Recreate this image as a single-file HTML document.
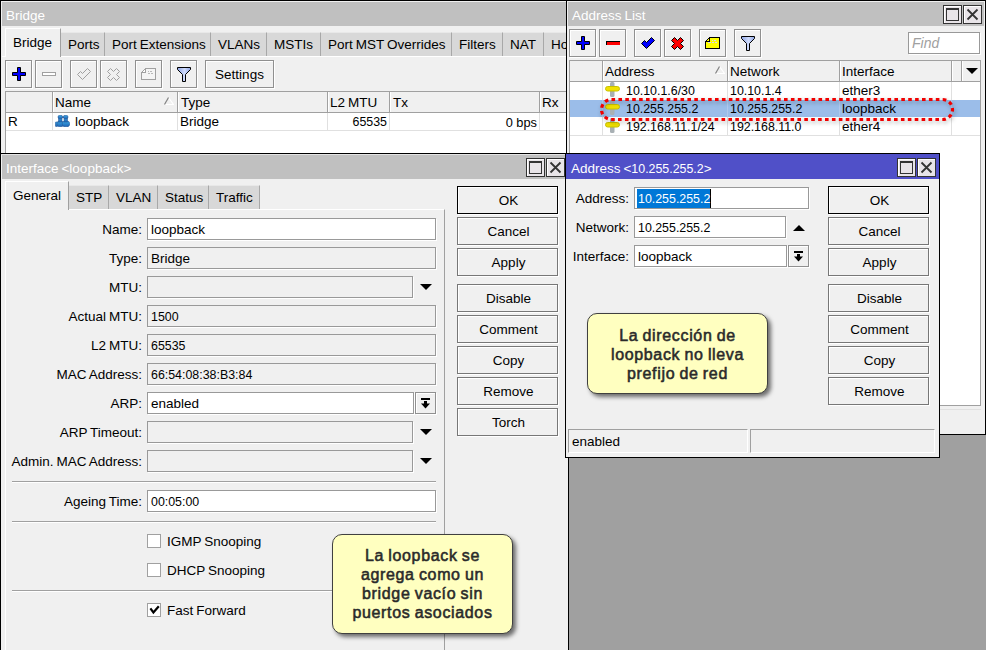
<!DOCTYPE html><html><head><meta charset="utf-8"><style>
*{margin:0;padding:0;box-sizing:border-box}
html,body{width:986px;height:650px;overflow:hidden}
body{background:#a0a0a0;position:relative;font-family:"Liberation Sans",sans-serif;font-size:13.5px;word-spacing:-0.8px;color:#000}
div,span{position:absolute}
.win{background:#f0f0f0;overflow:hidden}
.t{white-space:pre;line-height:15px}
</style></head><body>
<div class="win" style="left:0px;top:0px;width:568px;height:154px;z-index:1">
<div style="left:0;top:0;width:568px;height:154px;border:1px solid #000"></div>
<div style="left:2px;top:2px;width:564px;height:24px;background:#c0c0c0"></div>
<span class="t" style="left:6px;top:8px;color:#fff">Bridge</span>
<div style="left:2px;top:56px;width:564px;height:1px;background:#fff"></div>
<div style="left:61px;top:32px;width:44px;height:24px;background:#d8d8d8;border-right:1px solid #a8a8a8;border-top:1px solid #e8e8e8"></div>
<span class="t" style="left:68px;top:37px;">Ports</span>
<div style="left:105px;top:32px;width:106px;height:24px;background:#d8d8d8;border-right:1px solid #a8a8a8;border-top:1px solid #e8e8e8"></div>
<span class="t" style="left:112px;top:37px;">Port Extensions</span>
<div style="left:211px;top:32px;width:56px;height:24px;background:#d8d8d8;border-right:1px solid #a8a8a8;border-top:1px solid #e8e8e8"></div>
<span class="t" style="left:218px;top:37px;">VLANs</span>
<div style="left:267px;top:32px;width:54px;height:24px;background:#d8d8d8;border-right:1px solid #a8a8a8;border-top:1px solid #e8e8e8"></div>
<span class="t" style="left:274px;top:37px;">MSTIs</span>
<div style="left:321px;top:32px;width:131px;height:24px;background:#d8d8d8;border-right:1px solid #a8a8a8;border-top:1px solid #e8e8e8"></div>
<span class="t" style="left:328px;top:37px;">Port MST Overrides</span>
<div style="left:452px;top:32px;width:51px;height:24px;background:#d8d8d8;border-right:1px solid #a8a8a8;border-top:1px solid #e8e8e8"></div>
<span class="t" style="left:459px;top:37px;">Filters</span>
<div style="left:503px;top:32px;width:41px;height:24px;background:#d8d8d8;border-right:1px solid #a8a8a8;border-top:1px solid #e8e8e8"></div>
<span class="t" style="left:510px;top:37px;">NAT</span>
<div style="left:544px;top:32px;width:57px;height:24px;background:#d8d8d8;border-right:1px solid #a8a8a8;border-top:1px solid #e8e8e8"></div>
<span class="t" style="left:551px;top:37px;">Hotspot</span>
<div style="left:5px;top:28px;width:56px;height:29px;background:#f0f0f0;border-left:1px solid #fff;border-top:1px solid #fff;border-right:1px solid #a0a0a0"></div>
<span class="t" style="left:13px;top:35px;">Bridge</span>
<div style="left:5px;top:60px;width:27px;height:28px;border:1px solid #909090;background:#f0f0f0;box-shadow:inset 1px 1px #fff,1px 1px #fff"></div>
<div style="left:35px;top:60px;width:27px;height:28px;border:1px solid #909090;background:#f0f0f0;box-shadow:inset 1px 1px #fff,1px 1px #fff"></div>
<div style="left:70px;top:60px;width:27px;height:28px;border:1px solid #909090;background:#f0f0f0;box-shadow:inset 1px 1px #fff,1px 1px #fff"></div>
<div style="left:100px;top:60px;width:27px;height:28px;border:1px solid #909090;background:#f0f0f0;box-shadow:inset 1px 1px #fff,1px 1px #fff"></div>
<div style="left:135px;top:60px;width:27px;height:28px;border:1px solid #909090;background:#f0f0f0;box-shadow:inset 1px 1px #fff,1px 1px #fff"></div>
<div style="left:170px;top:60px;width:27px;height:28px;border:1px solid #909090;background:#f0f0f0;box-shadow:inset 1px 1px #fff,1px 1px #fff"></div>
<svg style="position:absolute;left:12px;top:67px" width="14" height="14" viewBox="0 0 14 14"><path d="M5.5 0.5H8.5V5.5H13.5V8.5H8.5V13.5H5.5V8.5H0.5V5.5H5.5Z" fill="#0000ff" stroke="#000" stroke-width="1"/></svg>
<svg style="position:absolute;left:42px;top:72px" width="14" height="4" viewBox="0 0 14 4"><rect x="0.5" y="0.5" width="13" height="3" fill="#fff" stroke="#a0a0a0"/></svg>
<svg style="position:absolute;left:77px;top:68px" width="14" height="12" viewBox="0 0 14 12"><path d="M0.5 6.5L3.5 3.5L5.5 5.5L10.5 0.5L13.5 3.5L5.5 11.5Z" fill="none" stroke="#a0a0a0"/></svg>
<svg style="position:absolute;left:107px;top:68px" width="13" height="13" viewBox="0 0 13 13"><path d="M0.5 3.5L3.5 0.5L6.5 3.5L9.5 0.5L12.5 3.5L9.5 6.5L12.5 9.5L9.5 12.5L6.5 9.5L3.5 12.5L0.5 9.5L3.5 6.5Z" fill="none" stroke="#a0a0a0"/></svg>
<svg style="position:absolute;left:141px;top:68px" width="15" height="12" viewBox="0 0 15 12"><g shape-rendering="crispEdges"><path d="M4 0H15V12H0V4Z" fill="#a0a0a0"/><path d="M5 1H14V11H1V5H5Z" fill="#f4f4f4"/><path d="M1 4L4 1V4Z" fill="#fff"/><path d="M0 4L4 0V1L1 4Z" fill="#a0a0a0"/><rect x="4" y="1" width="1" height="4" fill="#a0a0a0"/><rect x="0" y="4" width="5" height="1" fill="#a0a0a0"/><path d="M7 3h1v1h-1zM9 3h2v1h-2zM7 5h2v1h-2zM10 5h2v1h-2z" fill="#b8b8b8"/></g></svg>
<svg style="position:absolute;left:177px;top:67px" width="14" height="15" viewBox="0 0 14 15"><defs><linearGradient id="fgr" x1="0" x2="1" y1="0" y2="0"><stop offset="0" stop-color="#8ea4e4"/><stop offset="0.55" stop-color="#d0dcfc"/><stop offset="1" stop-color="#8ea4e4"/></linearGradient></defs><path d="M0.5 0.5H13.5V2.5L8.5 7.5V14.5H5.5V7.5L0.5 2.5Z" fill="url(#fgr)" stroke="#000" stroke-width="1"/></svg>
<div style="left:205px;top:60px;width:69px;height:28px;border:1px solid #909090;background:#f0f0f0;box-shadow:inset 1px 1px #fff,1px 1px #fff"></div>
<span class="t" style="left:205px;top:67px;width:69px;text-align:center;">Settings</span>
<div style="left:5px;top:91px;width:600px;height:62px;background:#fff;border:1px solid #a0a0a0;border-right:none;border-bottom:none"></div>
<div style="left:6px;top:92px;width:600px;height:21px;background:#f0f0f0;border-bottom:1px solid #a0a0a0"></div>
<div style="left:52px;top:92px;width:1px;height:20px;background:#a0a0a0"></div>
<div style="left:53px;top:92px;width:1px;height:20px;background:#fff"></div>
<div style="left:52px;top:113px;width:1px;height:17px;background:#e0e0e0"></div>
<div style="left:177px;top:92px;width:1px;height:20px;background:#a0a0a0"></div>
<div style="left:178px;top:92px;width:1px;height:20px;background:#fff"></div>
<div style="left:177px;top:113px;width:1px;height:17px;background:#e0e0e0"></div>
<div style="left:327px;top:92px;width:1px;height:20px;background:#a0a0a0"></div>
<div style="left:328px;top:92px;width:1px;height:20px;background:#fff"></div>
<div style="left:327px;top:113px;width:1px;height:17px;background:#e0e0e0"></div>
<div style="left:389px;top:92px;width:1px;height:20px;background:#a0a0a0"></div>
<div style="left:390px;top:92px;width:1px;height:20px;background:#fff"></div>
<div style="left:389px;top:113px;width:1px;height:17px;background:#e0e0e0"></div>
<div style="left:539px;top:92px;width:1px;height:20px;background:#a0a0a0"></div>
<div style="left:540px;top:92px;width:1px;height:20px;background:#fff"></div>
<div style="left:539px;top:113px;width:1px;height:17px;background:#e0e0e0"></div>
<div style="left:6px;top:130px;width:600px;height:1px;background:#e0e0e0"></div>
<span class="t" style="left:55px;top:95px;">Name</span>
<span class="t" style="left:181px;top:95px;">Type</span>
<span class="t" style="left:330px;top:95px;">L2 MTU</span>
<span class="t" style="left:393px;top:95px;">Tx</span>
<span class="t" style="left:542px;top:95px;">Rx</span>
<svg style="position:absolute;left:164px;top:97px" width="10" height="9" viewBox="0 0 10 9"><path d="M4.5 0.5L9.5 7.5H0.5" fill="none" stroke="#fff" stroke-width="1.2"/><path d="M0.5 7.5L4.5 0.5" fill="none" stroke="#808080" stroke-width="1.2"/></svg>
<span class="t" style="left:8px;top:114px;">R</span>
<svg style="position:absolute;left:55px;top:115px" width="15" height="12" viewBox="0 0 15 12"><defs><linearGradient id="bg1" x1="0" y1="0" x2="0" y2="1"><stop offset="0" stop-color="#3aa8e6"/><stop offset="1" stop-color="#1e64b4"/></linearGradient></defs><g fill="url(#bg1)" stroke="#2a5a9a" stroke-width="0.6"><rect x="0.3" y="7" width="2.4" height="4.5" rx="0.8"/><rect x="2" y="6" width="6.5" height="5.7" rx="2.5"/><rect x="7.2" y="6" width="7.5" height="5.7" rx="2.8"/><rect x="3.6" y="2" width="3.4" height="5"/><rect x="9" y="2" width="3.4" height="5"/><rect x="3" y="0.3" width="4.6" height="3.4" rx="1.7"/><rect x="8.4" y="0.3" width="4.6" height="3.4" rx="1.7"/></g><rect x="7.3" y="1.6" width="1.4" height="1.4" fill="#2a5a9a"/><rect x="7.3" y="3.5" width="1.4" height="2" fill="#c8d4e0"/></svg>
<span class="t" style="left:75px;top:114px;">loopback</span>
<span class="t" style="left:180px;top:114px;">Bridge</span>
<span class="t" style="right:181px;top:115px;font-size:12.4px">65535</span>
<span class="t" style="right:31px;top:115px;font-size:12.8px;word-spacing:0">0 bps</span>
</div>
<div class="win" style="left:566px;top:0px;width:420px;height:435px;z-index:2">
<div style="left:0;top:0;width:420px;height:435px;border:1px solid #000"></div>
<div style="left:2px;top:2px;width:416px;height:24px;background:#c0c0c0"></div>
<span class="t" style="left:6px;top:8px;color:#fff">Address List</span>
<div style="left:377px;top:5px;width:19px;height:19px;border:1px solid #333;background:#e8e4e8;box-shadow:inset 1px 1px #fff"></div>
<div style="left:380px;top:8px;width:13px;height:13px;border:1px solid #333;border-top-width:2px;background:#e8e4e8"></div>
<div style="left:397px;top:5px;width:19px;height:19px;border:1px solid #333;background:#e8e4e8;box-shadow:inset 1px 1px #fff"></div>
<svg style="position:absolute;left:400px;top:8px" width="13" height="13" viewBox="0 0 13 13"><path d="M1.5 1.5L11.5 11.5M11.5 1.5L1.5 11.5" stroke="#333" stroke-width="1.8"/></svg>
<div style="left:3px;top:29px;width:27px;height:28px;border:1px solid #909090;background:#f0f0f0;box-shadow:inset 1px 1px #fff,1px 1px #fff"></div>
<div style="left:33px;top:29px;width:27px;height:28px;border:1px solid #909090;background:#f0f0f0;box-shadow:inset 1px 1px #fff,1px 1px #fff"></div>
<div style="left:68px;top:29px;width:27px;height:28px;border:1px solid #909090;background:#f0f0f0;box-shadow:inset 1px 1px #fff,1px 1px #fff"></div>
<div style="left:98px;top:29px;width:27px;height:28px;border:1px solid #909090;background:#f0f0f0;box-shadow:inset 1px 1px #fff,1px 1px #fff"></div>
<div style="left:133px;top:29px;width:27px;height:28px;border:1px solid #909090;background:#f0f0f0;box-shadow:inset 1px 1px #fff,1px 1px #fff"></div>
<div style="left:168px;top:29px;width:27px;height:28px;border:1px solid #909090;background:#f0f0f0;box-shadow:inset 1px 1px #fff,1px 1px #fff"></div>
<svg style="position:absolute;left:10px;top:36px" width="14" height="14" viewBox="0 0 14 14"><path d="M5.5 0.5H8.5V5.5H13.5V8.5H8.5V13.5H5.5V8.5H0.5V5.5H5.5Z" fill="#0000ff" stroke="#000" stroke-width="1"/></svg>
<svg style="position:absolute;left:40px;top:41px" width="14" height="4" viewBox="0 0 14 4"><rect x="0.5" y="0.5" width="14" height="4" fill="#ff0000" stroke="#000"/></svg>
<svg style="position:absolute;left:75px;top:37px" width="14" height="12" viewBox="0 0 14 12"><path d="M0.5 6.5L3.5 3.5L5.5 5.5L10.5 0.5L13.5 3.5L5.5 11.5Z" fill="#0000ff" stroke="#000"/></svg>
<svg style="position:absolute;left:105px;top:37px" width="14" height="13" viewBox="0 0 14 13"><path d="M0.5 3.5L3.5 0.5L6.5 3.5L9.5 0.5L12.5 3.5L9.5 6.5L12.5 9.5L9.5 12.5L6.5 9.5L3.5 12.5L0.5 9.5L3.5 6.5Z" fill="#ff0000" stroke="#000"/></svg>
<svg style="position:absolute;left:139px;top:37px" width="15" height="12" viewBox="0 0 15 12"><g shape-rendering="crispEdges"><path d="M4 0H15V12H0V4Z" fill="#000"/><path d="M5 1H14V11H1V5H5Z" fill="#ffff00"/><path d="M1 4L4 1V4Z" fill="#ffff00"/><rect x="4" y="1" width="1" height="4" fill="#000"/><rect x="0" y="4" width="5" height="1" fill="#000"/><path d="M7 3h1v1h-1zM9 3h2v1h-2zM3 5h3v1h-3zM7 5h2v1h-2zM10 5h2v1h-2z" fill="#d8d8f0"/></g></svg>
<svg style="position:absolute;left:175px;top:36px" width="14" height="15" viewBox="0 0 14 15"><defs><linearGradient id="fgr" x1="0" x2="1" y1="0" y2="0"><stop offset="0" stop-color="#8ea4e4"/><stop offset="0.55" stop-color="#d0dcfc"/><stop offset="1" stop-color="#8ea4e4"/></linearGradient></defs><path d="M0.5 0.5H13.5V2.5L8.5 7.5V14.5H5.5V7.5L0.5 2.5Z" fill="url(#fgr)" stroke="#000" stroke-width="1"/></svg>
<div style="left:342px;top:32px;width:72px;height:22px;border:1px solid #999;background:#fff;box-shadow:1px 1px #fff"></div>
<span class="t" style="left:346px;top:36px;font-style:italic;color:#a0a0a0;font-size:14px">Find</span>
<div style="left:3px;top:60px;width:412px;height:346px;background:#fff;border:1px solid #a0a0a0"></div>
<div style="left:4px;top:61px;width:410px;height:21px;background:#f0f0f0;border-bottom:1px solid #a0a0a0"></div>
<div style="left:36px;top:61px;width:1px;height:20px;background:#a0a0a0"></div>
<div style="left:37px;top:61px;width:1px;height:20px;background:#fff"></div>
<div style="left:161px;top:61px;width:1px;height:20px;background:#a0a0a0"></div>
<div style="left:162px;top:61px;width:1px;height:20px;background:#fff"></div>
<div style="left:273px;top:61px;width:1px;height:20px;background:#a0a0a0"></div>
<div style="left:274px;top:61px;width:1px;height:20px;background:#fff"></div>
<div style="left:385px;top:61px;width:1px;height:20px;background:#a0a0a0"></div>
<div style="left:386px;top:61px;width:1px;height:20px;background:#fff"></div>
<div style="left:395px;top:61px;width:1px;height:20px;background:#a0a0a0"></div>
<div style="left:396px;top:61px;width:1px;height:20px;background:#fff"></div>
<div style="left:36px;top:82px;width:1px;height:53px;background:#e0e0e0"></div>
<div style="left:161px;top:82px;width:1px;height:53px;background:#e0e0e0"></div>
<div style="left:273px;top:82px;width:1px;height:53px;background:#e0e0e0"></div>
<div style="left:385px;top:82px;width:1px;height:53px;background:#e0e0e0"></div>
<div style="left:4px;top:135px;width:410px;height:1px;background:#e0e0e0"></div>
<div style="left:4px;top:100px;width:410px;height:17px;background:#9bbde9"></div>
<div style="left:36px;top:100px;width:1px;height:17px;background:#b0c8ec"></div>
<div style="left:161px;top:100px;width:1px;height:17px;background:#b0c8ec"></div>
<div style="left:273px;top:100px;width:1px;height:17px;background:#b0c8ec"></div>
<div style="left:385px;top:100px;width:1px;height:17px;background:#b0c8ec"></div>
<span class="t" style="left:39px;top:64px;">Address</span>
<span class="t" style="left:164px;top:64px;">Network</span>
<span class="t" style="left:276px;top:64px;">Interface</span>
<svg style="position:absolute;left:149px;top:66px" width="10" height="9" viewBox="0 0 10 9"><path d="M4.5 0.5L9.5 7.5H0.5" fill="none" stroke="#fff" stroke-width="1.2"/><path d="M0.5 7.5L4.5 0.5" fill="none" stroke="#808080" stroke-width="1.2"/></svg>
<svg style="position:absolute;left:400px;top:68px" width="12" height="6" viewBox="0 0 12 6"><path d="M0 0H12L6 6Z" fill="#000"/></svg>
<svg style="position:absolute;left:39px;top:82px" width="15" height="15" viewBox="0 0 15 15"><rect x="5" y="0" width="4.5" height="15" rx="1.5" fill="#a8b0b4"/><rect x="0.5" y="4.5" width="14" height="4.5" rx="2.2" fill="#f0e000" stroke="#c8c000" stroke-width="1"/></svg>
<span class="t" style="left:60px;top:84px;font-size:12.4px">10.10.1.6/30</span>
<span class="t" style="left:164px;top:84px;font-size:12.4px">10.10.1.4</span>
<span class="t" style="left:276px;top:83px;">ether3</span>
<svg style="position:absolute;left:39px;top:100px" width="15" height="15" viewBox="0 0 15 15"><rect x="5" y="0" width="4.5" height="15" rx="1.5" fill="#a8b0b4"/><rect x="0.5" y="4.5" width="14" height="4.5" rx="2.2" fill="#f0e000" stroke="#c8c000" stroke-width="1"/></svg>
<span class="t" style="left:60px;top:102px;font-size:12.4px">10.255.255.2</span>
<span class="t" style="left:164px;top:102px;font-size:12.4px">10.255.255.2</span>
<span class="t" style="left:276px;top:101px;">loopback</span>
<svg style="position:absolute;left:39px;top:118px" width="15" height="15" viewBox="0 0 15 15"><rect x="5" y="0" width="4.5" height="15" rx="1.5" fill="#a8b0b4"/><rect x="0.5" y="4.5" width="14" height="4.5" rx="2.2" fill="#f0e000" stroke="#c8c000" stroke-width="1"/></svg>
<span class="t" style="left:60px;top:120px;font-size:12.4px">192.168.11.1/24</span>
<span class="t" style="left:164px;top:120px;font-size:12.4px">192.168.11.0</span>
<span class="t" style="left:276px;top:119px;">ether4</span>
<div style="left:3px;top:409px;width:412px;height:21px;border-top:1px solid #e0e0e0"></div>
</div>
<div class="win" style="left:0px;top:153px;width:569px;height:510px;z-index:3">
<div style="left:0;top:0;width:569px;height:510px;border:1px solid #000"></div>
<div style="left:1px;top:1px;width:567px;height:1px;background:#e4e4e4"></div>
<div style="left:2px;top:2px;width:565px;height:24px;background:#c0c0c0"></div>
<span class="t" style="left:6px;top:8px;color:#fff">Interface &lt;loopback&gt;</span>
<div style="left:526px;top:5px;width:19px;height:19px;border:1px solid #333;background:#e8e4e8;box-shadow:inset 1px 1px #fff"></div>
<div style="left:529px;top:8px;width:13px;height:13px;border:1px solid #333;border-top-width:2px;background:#e8e4e8"></div>
<div style="left:546px;top:5px;width:19px;height:19px;border:1px solid #333;background:#e8e4e8;box-shadow:inset 1px 1px #fff"></div>
<svg style="position:absolute;left:549px;top:8px" width="13" height="13" viewBox="0 0 13 13"><path d="M1.5 1.5L11.5 11.5M11.5 1.5L1.5 11.5" stroke="#333" stroke-width="1.8"/></svg>
<div style="left:5px;top:56px;width:440px;height:500px;border-left:1px solid #fff;border-top:1px solid #fff;border-right:1px solid #a0a0a0"></div>
<div style="left:69px;top:32px;width:40px;height:24px;background:#d8d8d8;border-right:1px solid #a8a8a8;border-top:1px solid #e8e8e8"></div>
<span class="t" style="left:76px;top:37px;">STP</span>
<div style="left:109px;top:32px;width:49px;height:24px;background:#d8d8d8;border-right:1px solid #a8a8a8;border-top:1px solid #e8e8e8"></div>
<span class="t" style="left:116px;top:37px;">VLAN</span>
<div style="left:158px;top:32px;width:51px;height:24px;background:#d8d8d8;border-right:1px solid #a8a8a8;border-top:1px solid #e8e8e8"></div>
<span class="t" style="left:165px;top:37px;">Status</span>
<div style="left:209px;top:32px;width:51px;height:24px;background:#d8d8d8;border-right:1px solid #a8a8a8;border-top:1px solid #e8e8e8"></div>
<span class="t" style="left:216px;top:37px;">Traffic</span>
<div style="left:5px;top:28px;width:64px;height:29px;background:#f0f0f0;border-left:1px solid #fff;border-top:1px solid #fff;border-right:1px solid #a0a0a0"></div>
<span class="t" style="left:13px;top:35px;">General</span>
<span class="t" style="right:427px;top:69px;">Name:</span>
<div style="left:147px;top:65px;width:289px;height:22px;border:1px solid #999;background:#fff;box-shadow:1px 1px #fff"></div>
<span class="t" style="left:151px;top:69px;">loopback</span>
<span class="t" style="right:427px;top:98px;">Type:</span>
<div style="left:147px;top:94px;width:289px;height:22px;border:1px solid #999;background:#f0f0f0;box-shadow:1px 1px #fff"></div>
<span class="t" style="left:151px;top:98px;">Bridge</span>
<span class="t" style="right:427px;top:127px;">MTU:</span>
<div style="left:147px;top:123px;width:266px;height:22px;border:1px solid #999;background:#f0f0f0;box-shadow:1px 1px #fff"></div>
<svg style="position:absolute;left:420px;top:131px" width="12" height="6" viewBox="0 0 12 6"><path d="M0 0H12L6 6Z" fill="#000"/></svg>
<span class="t" style="right:427px;top:156px;">Actual MTU:</span>
<div style="left:147px;top:152px;width:289px;height:22px;border:1px solid #999;background:#f0f0f0;box-shadow:1px 1px #fff"></div>
<span class="t" style="left:151px;top:157px;font-size:12.4px">1500</span>
<span class="t" style="right:427px;top:185px;">L2 MTU:</span>
<div style="left:147px;top:181px;width:289px;height:22px;border:1px solid #999;background:#f0f0f0;box-shadow:1px 1px #fff"></div>
<span class="t" style="left:151px;top:186px;font-size:12.4px">65535</span>
<span class="t" style="right:427px;top:214px;">MAC Address:</span>
<div style="left:147px;top:210px;width:289px;height:22px;border:1px solid #999;background:#f0f0f0;box-shadow:1px 1px #fff"></div>
<span class="t" style="left:151px;top:215px;font-size:12.4px">66:54:08:38:B3:84</span>
<span class="t" style="right:427px;top:243px;">ARP:</span>
<div style="left:147px;top:239px;width:267px;height:22px;border:1px solid #999;background:#fff;box-shadow:1px 1px #fff"></div>
<div style="left:415px;top:239px;width:21px;height:22px;border:1px solid #909090;background:#f0f0f0;box-shadow:inset 1px 1px #fff,1px 1px #fff"></div>
<svg style="position:absolute;left:421px;top:245px" width="9" height="11" viewBox="0 0 9 11"><rect x="0" y="0" width="9" height="2" fill="#000"/><rect x="3" y="3" width="3" height="3" fill="#000"/><path d="M0 5.5H9L4.5 10.5Z" fill="#000"/></svg>
<span class="t" style="left:151px;top:243px;">enabled</span>
<span class="t" style="right:427px;top:272px;">ARP Timeout:</span>
<div style="left:147px;top:268px;width:266px;height:22px;border:1px solid #999;background:#f0f0f0;box-shadow:1px 1px #fff"></div>
<svg style="position:absolute;left:420px;top:276px" width="12" height="6" viewBox="0 0 12 6"><path d="M0 0H12L6 6Z" fill="#000"/></svg>
<span class="t" style="right:427px;top:301px;">Admin. MAC Address:</span>
<div style="left:147px;top:297px;width:266px;height:22px;border:1px solid #999;background:#f0f0f0;box-shadow:1px 1px #fff"></div>
<svg style="position:absolute;left:420px;top:305px" width="12" height="6" viewBox="0 0 12 6"><path d="M0 0H12L6 6Z" fill="#000"/></svg>
<span class="t" style="right:427px;top:341px;">Ageing Time:</span>
<div style="left:147px;top:337px;width:289px;height:22px;border:1px solid #999;background:#fff;box-shadow:1px 1px #fff"></div>
<span class="t" style="left:151px;top:342px;font-size:12.4px">00:05:00</span>
<div style="left:12px;top:328px;width:424px;height:1px;background:#a0a0a0"></div>
<div style="left:12px;top:329px;width:424px;height:1px;background:#fff"></div>
<div style="left:12px;top:368px;width:424px;height:1px;background:#a0a0a0"></div>
<div style="left:12px;top:369px;width:424px;height:1px;background:#fff"></div>
<div style="left:12px;top:437px;width:424px;height:1px;background:#a0a0a0"></div>
<div style="left:12px;top:438px;width:424px;height:1px;background:#fff"></div>
<div style="left:147px;top:381px;width:14px;height:14px;border:1px solid #a0a0a0;background:#fff"></div>
<span class="t" style="left:167px;top:381px;">IGMP Snooping</span>
<div style="left:147px;top:410px;width:14px;height:14px;border:1px solid #a0a0a0;background:#fff"></div>
<span class="t" style="left:167px;top:410px;">DHCP Snooping</span>
<div style="left:147px;top:450px;width:14px;height:14px;border:1px solid #a0a0a0;background:#fff"></div>
<svg style="position:absolute;left:149px;top:452px" width="11" height="10" viewBox="0 0 11 10"><path d="M1.4 3.4L4.4 7.4L9.8 1.2" fill="none" stroke="#000" stroke-width="2.2"/></svg>
<span class="t" style="left:167px;top:450px;">Fast Forward</span>
<div style="left:457px;top:33px;width:101px;height:28px;border:1px solid #000;background:#f0f0f0;box-shadow:inset 1px 1px #fff,1px 1px #fff"></div>
<span class="t" style="left:458px;top:40px;width:101px;text-align:center;">OK</span>
<div style="left:457px;top:64px;width:101px;height:28px;border:1px solid #777;background:#f0f0f0;box-shadow:inset 1px 1px #fff,1px 1px #fff"></div>
<span class="t" style="left:458px;top:71px;width:101px;text-align:center;">Cancel</span>
<div style="left:457px;top:95px;width:101px;height:28px;border:1px solid #777;background:#f0f0f0;box-shadow:inset 1px 1px #fff,1px 1px #fff"></div>
<span class="t" style="left:458px;top:102px;width:101px;text-align:center;">Apply</span>
<div style="left:457px;top:131px;width:101px;height:28px;border:1px solid #777;background:#f0f0f0;box-shadow:inset 1px 1px #fff,1px 1px #fff"></div>
<span class="t" style="left:458px;top:138px;width:101px;text-align:center;">Disable</span>
<div style="left:457px;top:162px;width:101px;height:28px;border:1px solid #777;background:#f0f0f0;box-shadow:inset 1px 1px #fff,1px 1px #fff"></div>
<span class="t" style="left:458px;top:169px;width:101px;text-align:center;">Comment</span>
<div style="left:457px;top:193px;width:101px;height:28px;border:1px solid #777;background:#f0f0f0;box-shadow:inset 1px 1px #fff,1px 1px #fff"></div>
<span class="t" style="left:458px;top:200px;width:101px;text-align:center;">Copy</span>
<div style="left:457px;top:224px;width:101px;height:28px;border:1px solid #777;background:#f0f0f0;box-shadow:inset 1px 1px #fff,1px 1px #fff"></div>
<span class="t" style="left:458px;top:231px;width:101px;text-align:center;">Remove</span>
<div style="left:457px;top:255px;width:101px;height:28px;border:1px solid #777;background:#f0f0f0;box-shadow:inset 1px 1px #fff,1px 1px #fff"></div>
<span class="t" style="left:458px;top:262px;width:101px;text-align:center;">Torch</span>
</div>
<div class="win" style="left:565px;top:153px;width:375px;height:305px;z-index:4">
<div style="left:0;top:0;width:375px;height:305px;border:1px solid #000"></div>
<div style="left:1px;top:1px;width:373px;height:25px;background:#5050c8"></div>
<span class="t" style="left:6px;top:8px;color:#fff">Address &lt;<span style="position:static;font-size:12.4px">10.255.255.2</span>&gt;</span>
<div style="left:332px;top:5px;width:19px;height:19px;border:1px solid #333;background:#e8e4e8;box-shadow:inset 1px 1px #fff"></div>
<div style="left:335px;top:8px;width:13px;height:13px;border:1px solid #333;border-top-width:2px;background:#e8e4e8"></div>
<div style="left:352px;top:5px;width:19px;height:19px;border:1px solid #333;background:#e8e4e8;box-shadow:inset 1px 1px #fff"></div>
<svg style="position:absolute;left:355px;top:8px" width="13" height="13" viewBox="0 0 13 13"><path d="M1.5 1.5L11.5 11.5M11.5 1.5L1.5 11.5" stroke="#333" stroke-width="1.8"/></svg>
<span class="t" style="right:311px;top:38px;">Address:</span>
<span class="t" style="right:311px;top:67px;">Network:</span>
<span class="t" style="right:311px;top:96px;">Interface:</span>
<div style="left:69px;top:34px;width:175px;height:22px;border:1px solid #999;background:#fff;box-shadow:1px 1px #fff"></div>
<div style="left:72px;top:36px;width:74px;height:19px;background:#0078d7"></div>
<div style="left:145px;top:36px;width:1px;height:19px;background:#000"></div>
<span class="t" style="left:73px;top:39px;color:#fff;font-size:12.4px">10.255.255.2</span>
<div style="left:69px;top:63px;width:152px;height:22px;border:1px solid #999;background:#fff;box-shadow:1px 1px #fff"></div>
<span class="t" style="left:73px;top:68px;font-size:12.4px">10.255.255.2</span>
<svg style="position:absolute;left:228px;top:72px" width="12" height="6" viewBox="0 0 12 6"><path d="M0 6H12L6 0Z" fill="#000"/></svg>
<div style="left:69px;top:92px;width:153px;height:22px;border:1px solid #999;background:#fff;box-shadow:1px 1px #fff"></div>
<span class="t" style="left:73px;top:96px;">loopback</span>
<div style="left:223px;top:92px;width:21px;height:22px;border:1px solid #909090;background:#f0f0f0;box-shadow:inset 1px 1px #fff,1px 1px #fff"></div>
<svg style="position:absolute;left:229px;top:98px" width="9" height="11" viewBox="0 0 9 11"><rect x="0" y="0" width="9" height="2" fill="#000"/><rect x="3" y="3" width="3" height="3" fill="#000"/><path d="M0 5.5H9L4.5 10.5Z" fill="#000"/></svg>
<div style="left:263px;top:33px;width:101px;height:28px;border:1px solid #000;background:#f0f0f0;box-shadow:inset 1px 1px #fff,1px 1px #fff"></div>
<span class="t" style="left:264px;top:40px;width:101px;text-align:center;">OK</span>
<div style="left:263px;top:64px;width:101px;height:28px;border:1px solid #777;background:#f0f0f0;box-shadow:inset 1px 1px #fff,1px 1px #fff"></div>
<span class="t" style="left:264px;top:71px;width:101px;text-align:center;">Cancel</span>
<div style="left:263px;top:95px;width:101px;height:28px;border:1px solid #777;background:#f0f0f0;box-shadow:inset 1px 1px #fff,1px 1px #fff"></div>
<span class="t" style="left:264px;top:102px;width:101px;text-align:center;">Apply</span>
<div style="left:263px;top:131px;width:101px;height:28px;border:1px solid #777;background:#f0f0f0;box-shadow:inset 1px 1px #fff,1px 1px #fff"></div>
<span class="t" style="left:264px;top:138px;width:101px;text-align:center;">Disable</span>
<div style="left:263px;top:162px;width:101px;height:28px;border:1px solid #777;background:#f0f0f0;box-shadow:inset 1px 1px #fff,1px 1px #fff"></div>
<span class="t" style="left:264px;top:169px;width:101px;text-align:center;">Comment</span>
<div style="left:263px;top:193px;width:101px;height:28px;border:1px solid #777;background:#f0f0f0;box-shadow:inset 1px 1px #fff,1px 1px #fff"></div>
<span class="t" style="left:264px;top:200px;width:101px;text-align:center;">Copy</span>
<div style="left:263px;top:224px;width:101px;height:28px;border:1px solid #777;background:#f0f0f0;box-shadow:inset 1px 1px #fff,1px 1px #fff"></div>
<span class="t" style="left:264px;top:231px;width:101px;text-align:center;">Remove</span>
<div style="left:3px;top:276px;width:180px;height:24px;border-top:1px solid #a0a0a0;border-left:1px solid #a0a0a0;border-right:1px solid #fff;border-bottom:1px solid #fff"></div>
<div style="left:185px;top:276px;width:185px;height:24px;border-top:1px solid #a0a0a0;border-left:1px solid #a0a0a0;border-right:1px solid #fff;border-bottom:1px solid #fff"></div>
<span class="t" style="left:7px;top:281px;">enabled</span>
</div>
<svg style="position:absolute;left:598px;top:96px;z-index:10;filter:drop-shadow(1px 2px 2px rgba(0,0,0,0.35))" width="360" height="28" viewBox="0 0 360 28"><rect x="3.5" y="3.5" width="351" height="20" rx="10" fill="none" stroke="#f00000" stroke-width="3.2" stroke-dasharray="3.6 3.3"/></svg>
<div style="left:587px;top:313px;width:181px;height:81px;background:#ffffc0;border:1px solid #404040;border-radius:10px;box-shadow:3px 3px 4px rgba(0,0,0,0.55);z-index:10"></div>
<span style="left:587px;top:326px;width:181px;font-weight:normal;-webkit-text-stroke:0.55px #2a2a2a;font-size:16px;color:#2a2a2a;letter-spacing:0.65px;line-height:19px;text-align:center;white-space:pre;z-index:11">La dirección de
loopback no lleva
prefijo de red</span>
<div style="left:332px;top:534px;width:181px;height:100px;background:#ffffc0;border:1px solid #404040;border-radius:10px;box-shadow:3px 3px 4px rgba(0,0,0,0.55);z-index:10"></div>
<span style="left:332px;top:546px;width:181px;font-weight:normal;-webkit-text-stroke:0.55px #2a2a2a;font-size:16px;color:#2a2a2a;letter-spacing:0.65px;line-height:19px;text-align:center;white-space:pre;z-index:11">La loopback se
agrega como un
bridge vacío sin
puertos asociados</span>
</body></html>
